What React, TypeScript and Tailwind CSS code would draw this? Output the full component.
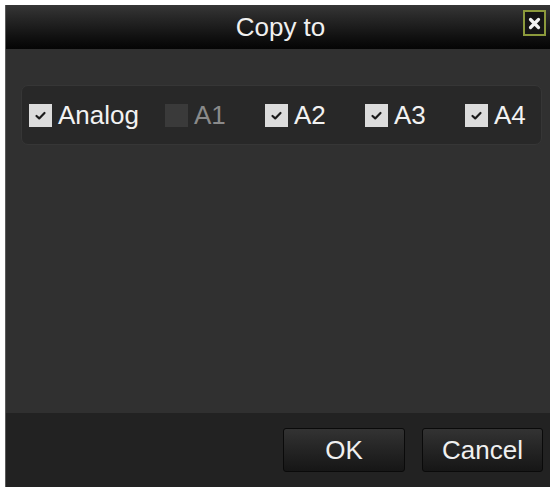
import React from "react";

function Check({ checked }: { checked: boolean }) {
  if (!checked) {
    return <div className="w-[23px] h-[23px] bg-[#3a3a3a] shrink-0" />;
  }
  return (
    <div className="w-[23px] h-[23px] bg-[#dcdcdc] shrink-0 flex items-center justify-center">
      <svg width="13" height="11" viewBox="0 0 13 11">
        <path d="M2.5 6 L5.2 8.4 L10.5 3" fill="none" stroke="#1a1a1a" strokeWidth="2.2" strokeLinecap="round" strokeLinejoin="round" />
      </svg>
    </div>
  );
}

function Item({ label, checked, dim, w }: { label: string; checked: boolean; dim?: boolean; w: string }) {
  return (
    <div className={`flex items-center gap-[6px] ${w}`}>
      <Check checked={checked} />
      <span className={`text-[26px] leading-none ${dim ? "text-[#8a8a8a]" : "text-[#f2f2f2]"}`}>{label}</span>
    </div>
  );
}

export default function App() {
  return (
    <div className="w-[556px] h-[487px] bg-white pl-[5px] pt-[5px] overflow-hidden" style={{ fontFamily: '"Liberation Sans", Arial, sans-serif' }}>
      <div className="w-[545px] h-[482px] flex flex-col border-l border-[#5a5a5a] bg-[#303030]">
        <div className="relative h-[44px] flex items-center justify-center bg-gradient-to-b from-[#363636] via-[#1c1c1c] to-[#050505]">
          <span className="text-[26px] text-[#f0f0f0] leading-none pl-[5px]">Copy to</span>
          <div className="absolute right-[4px] top-[5px] w-[23px] h-[26px] border-2 border-[#8c9a3c] bg-[#151515] flex items-center justify-center">
            <svg width="13" height="13" viewBox="0 0 13 13">
              <path d="M2.5 2.5 L10.5 10.5 M10.5 2.5 L2.5 10.5" stroke="#f4f4f4" strokeWidth="3.2" strokeLinecap="round" />
            </svg>
          </div>
        </div>
        <div className="flex-1 pt-[36px] pl-[15px] pr-[8px]">
          <div className="h-[60px] rounded-[7px] bg-[#282828] border border-[#363636] flex items-center pl-[7px]">
            <Item label="Analog" checked w="w-[136px]" />
            <Item label="A1" checked={false} dim w="w-[100px]" />
            <Item label="A2" checked w="w-[100px]" />
            <Item label="A3" checked w="w-[100px]" />
            <Item label="A4" checked w="w-[70px]" />
          </div>
        </div>
        <div className="h-[74px] bg-[#222222] flex justify-end items-start pt-[15px] pr-[7px] gap-[17px]">
          <button className="w-[122px] h-[44px] rounded-[3px] border border-[#0a0a0a] bg-gradient-to-b from-[#333333] to-[#161616] text-[#f0f0f0] text-[26px] leading-none">OK</button>
          <button className="w-[121px] h-[44px] rounded-[3px] border border-[#0a0a0a] bg-gradient-to-b from-[#333333] to-[#161616] text-[#f0f0f0] text-[26px] leading-none">Cancel</button>
        </div>
      </div>
    </div>
  );
}
